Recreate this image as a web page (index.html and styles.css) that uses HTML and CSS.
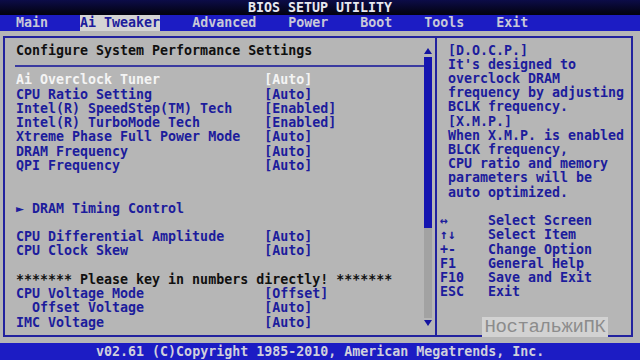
FILE: index.html
```html
<!DOCTYPE html>
<html lang="en">
<head>
  <meta charset="UTF-8">
  <title>BIOS Setup Utility</title>
  <link rel="stylesheet" href="styles.css">
</head>
<body>

  <div class="title">BIOS SETUP UTILITY</div>

  <div class="menu">
    <span>Main</span>
    <span class="active">Ai Tweaker</span>
    <span>Advanced</span>
    <span>Power</span>
    <span>Boot</span>
    <span>Tools</span>
    <span>Exit</span>
  </div>

  <div class="frame">
    <div class="left">
      <div class="content">
        <div class="heading">Configure System Performance Settings</div>
        <div class="rule"></div>
        <div class="settings">
          <div class="row sel"><span>Ai Overclock Tuner</span><span>[Auto]</span></div>
          <div class="row"><span>CPU Ratio Setting</span><span>[Auto]</span></div>
          <div class="row"><span>Intel(R) SpeedStep(TM) Tech</span><span>[Enabled]</span></div>
          <div class="row"><span>Intel(R) TurboMode Tech</span><span>[Enabled]</span></div>
          <div class="row"><span>Xtreme Phase Full Power Mode</span><span>[Auto]</span></div>
          <div class="row"><span>DRAM Frequency</span><span>[Auto]</span></div>
          <div class="row"><span>QPI Frequency</span><span>[Auto]</span></div>
          <div class="row"></div>
          <div class="row"></div>
          <div class="row"><span><span class="tri">&#9658;</span> DRAM Timing Control</span></div>
          <div class="row"></div>
          <div class="row"><span>CPU Differential Amplitude</span><span>[Auto]</span></div>
          <div class="row"><span>CPU Clock Skew</span><span>[Auto]</span></div>
          <div class="row"></div>
          <div class="row note">******* Please key in numbers directly! *******</div>
          <div class="row"><span>CPU Voltage Mode</span><span>[Offset]</span></div>
          <div class="row"><span class="sub">Offset Voltage</span><span>[Auto]</span></div>
          <div class="row"><span>IMC Voltage</span><span>[Auto]</span></div>
        </div>
      </div>
      <div class="scrollbar">
        <div class="arrow up"></div>
        <div class="thumb"></div>
        <div class="track"></div>
        <div class="arrow down"></div>
      </div>
    </div>

    <div class="right">
      <div class="help">
        <div>[D.O.C.P.]</div>
        <div>It's designed to</div>
        <div>overclock DRAM</div>
        <div>frequency by adjusting</div>
        <div>BCLK frequency.</div>
        <div>[X.M.P.]</div>
        <div>When X.M.P. is enabled</div>
        <div>BLCK frequency,</div>
        <div>CPU ratio and memory</div>
        <div>parameters will be</div>
        <div>auto optimized.</div>
      </div>
      <div class="keys">
        <span>&#8596;</span><span>Select Screen</span>
        <span>&#8593;&#8595;</span><span>Select Item</span>
        <span>+-</span><span>Change Option</span>
        <span>F1</span><span>General Help</span>
        <span>F10</span><span>Save and Exit</span>
        <span>ESC</span><span>Exit</span>
      </div>
      <div class="mark">НостальжиПК</div>
    </div>
  </div>

  <div class="footer">v02.61 (C)Copyright 1985-2010, American Megatrends, Inc.</div>

</body>
</html>
```

FILE: styles.css
```css
body {
  margin: 0;
  width: 640px;
  height: 360px;
  overflow: hidden;
  background-color: #b6b6b6;
  font-family: "DejaVu Sans Mono", "Liberation Mono", monospace;
  font-weight: bold;
  font-size: 13.3px;
  line-height: 14.22px;
  color: #1c1c9c;
  white-space: nowrap;
}

.title {
  height: 15px;
  line-height: 15px;
  text-align: center;
  color: #e8e8f0;
  background: linear-gradient(#0c0c48, #02020e);
}

.menu {
  height: 16px;
  line-height: 16px;
  display: flex;
  gap: 4ch;
  padding-left: 2ch;
  background-color: #1c1cc4;
  color: #c8c8d8;
}

.menu .active {
  background-color: #d4d4d4;
  color: #1c1c9c;
}

.frame {
  margin: 5px 0 0 3px;
  width: 626px;
  height: 297px;
  border: 2px solid #22229e;
  display: flex;
}

.left {
  width: 419px;
  padding-left: 11px;
  border-right: 2px solid #22229e;
  display: flex;
}

.content {
  flex: 1;
  padding-top: 5.5px;
}

.heading {
  height: 14.22px;
  color: #101010;
}

.rule {
  box-sizing: border-box;
  height: 15.6px;
  padding-top: 7px;
  margin-left: -1px;
}

.rule::after {
  content: "";
  display: block;
  height: 2px;
  background-color: #3a3aa0;
}

.row {
  height: 14.25px;
  display: grid;
  grid-template-columns: 31ch auto;
}

.row.sel {
  color: #f4f4f4;
}

.row.note {
  display: block;
  color: #101010;
}

.tri {
  font-size: 13.3px;
}

.sub {
  padding-left: 2ch;
}

.scrollbar {
  width: 8px;
  margin: 10px 3px 0 0;
  display: flex;
  flex-direction: column;
}

.arrow {
  width: 0;
  height: 0;
  border-left: 4px solid transparent;
  border-right: 4px solid transparent;
}

.arrow.up {
  border-bottom: 6px solid #1414a0;
  margin-bottom: 3px;
}

.arrow.down {
  border-top: 6px solid #1414a0;
  margin-top: 2px;
}

.thumb {
  height: 171px;
  background-color: #1414b0;
}

.track {
  height: 90px;
  background-color: #a2a2a2;
}

.right {
  flex: 1;
  position: relative;
  padding: 5.5px 0 0 3px;
}

.help {
  margin-left: 1ch;
  margin-bottom: 14.22px;
}

.help div {
  height: 14.22px;
}

.keys {
  display: grid;
  grid-template-columns: 6ch auto;
  grid-auto-rows: 14.22px;
}

.mark {
  position: absolute;
  left: 45px;
  top: 279px;
  width: 126px;
  height: 20px;
  line-height: 20px;
  text-align: center;
  font-family: "Liberation Mono", monospace;
  font-weight: normal;
  font-size: 19px;
  letter-spacing: -0.4px;
  color: #8c8c8c;
  background-color: #d2d2d2;
}

.footer {
  margin-top: 6px;
  height: 17px;
  line-height: 17px;
  padding-left: 12ch;
  background-color: #1c1cc4;
  color: #d0d0dc;
}
```
